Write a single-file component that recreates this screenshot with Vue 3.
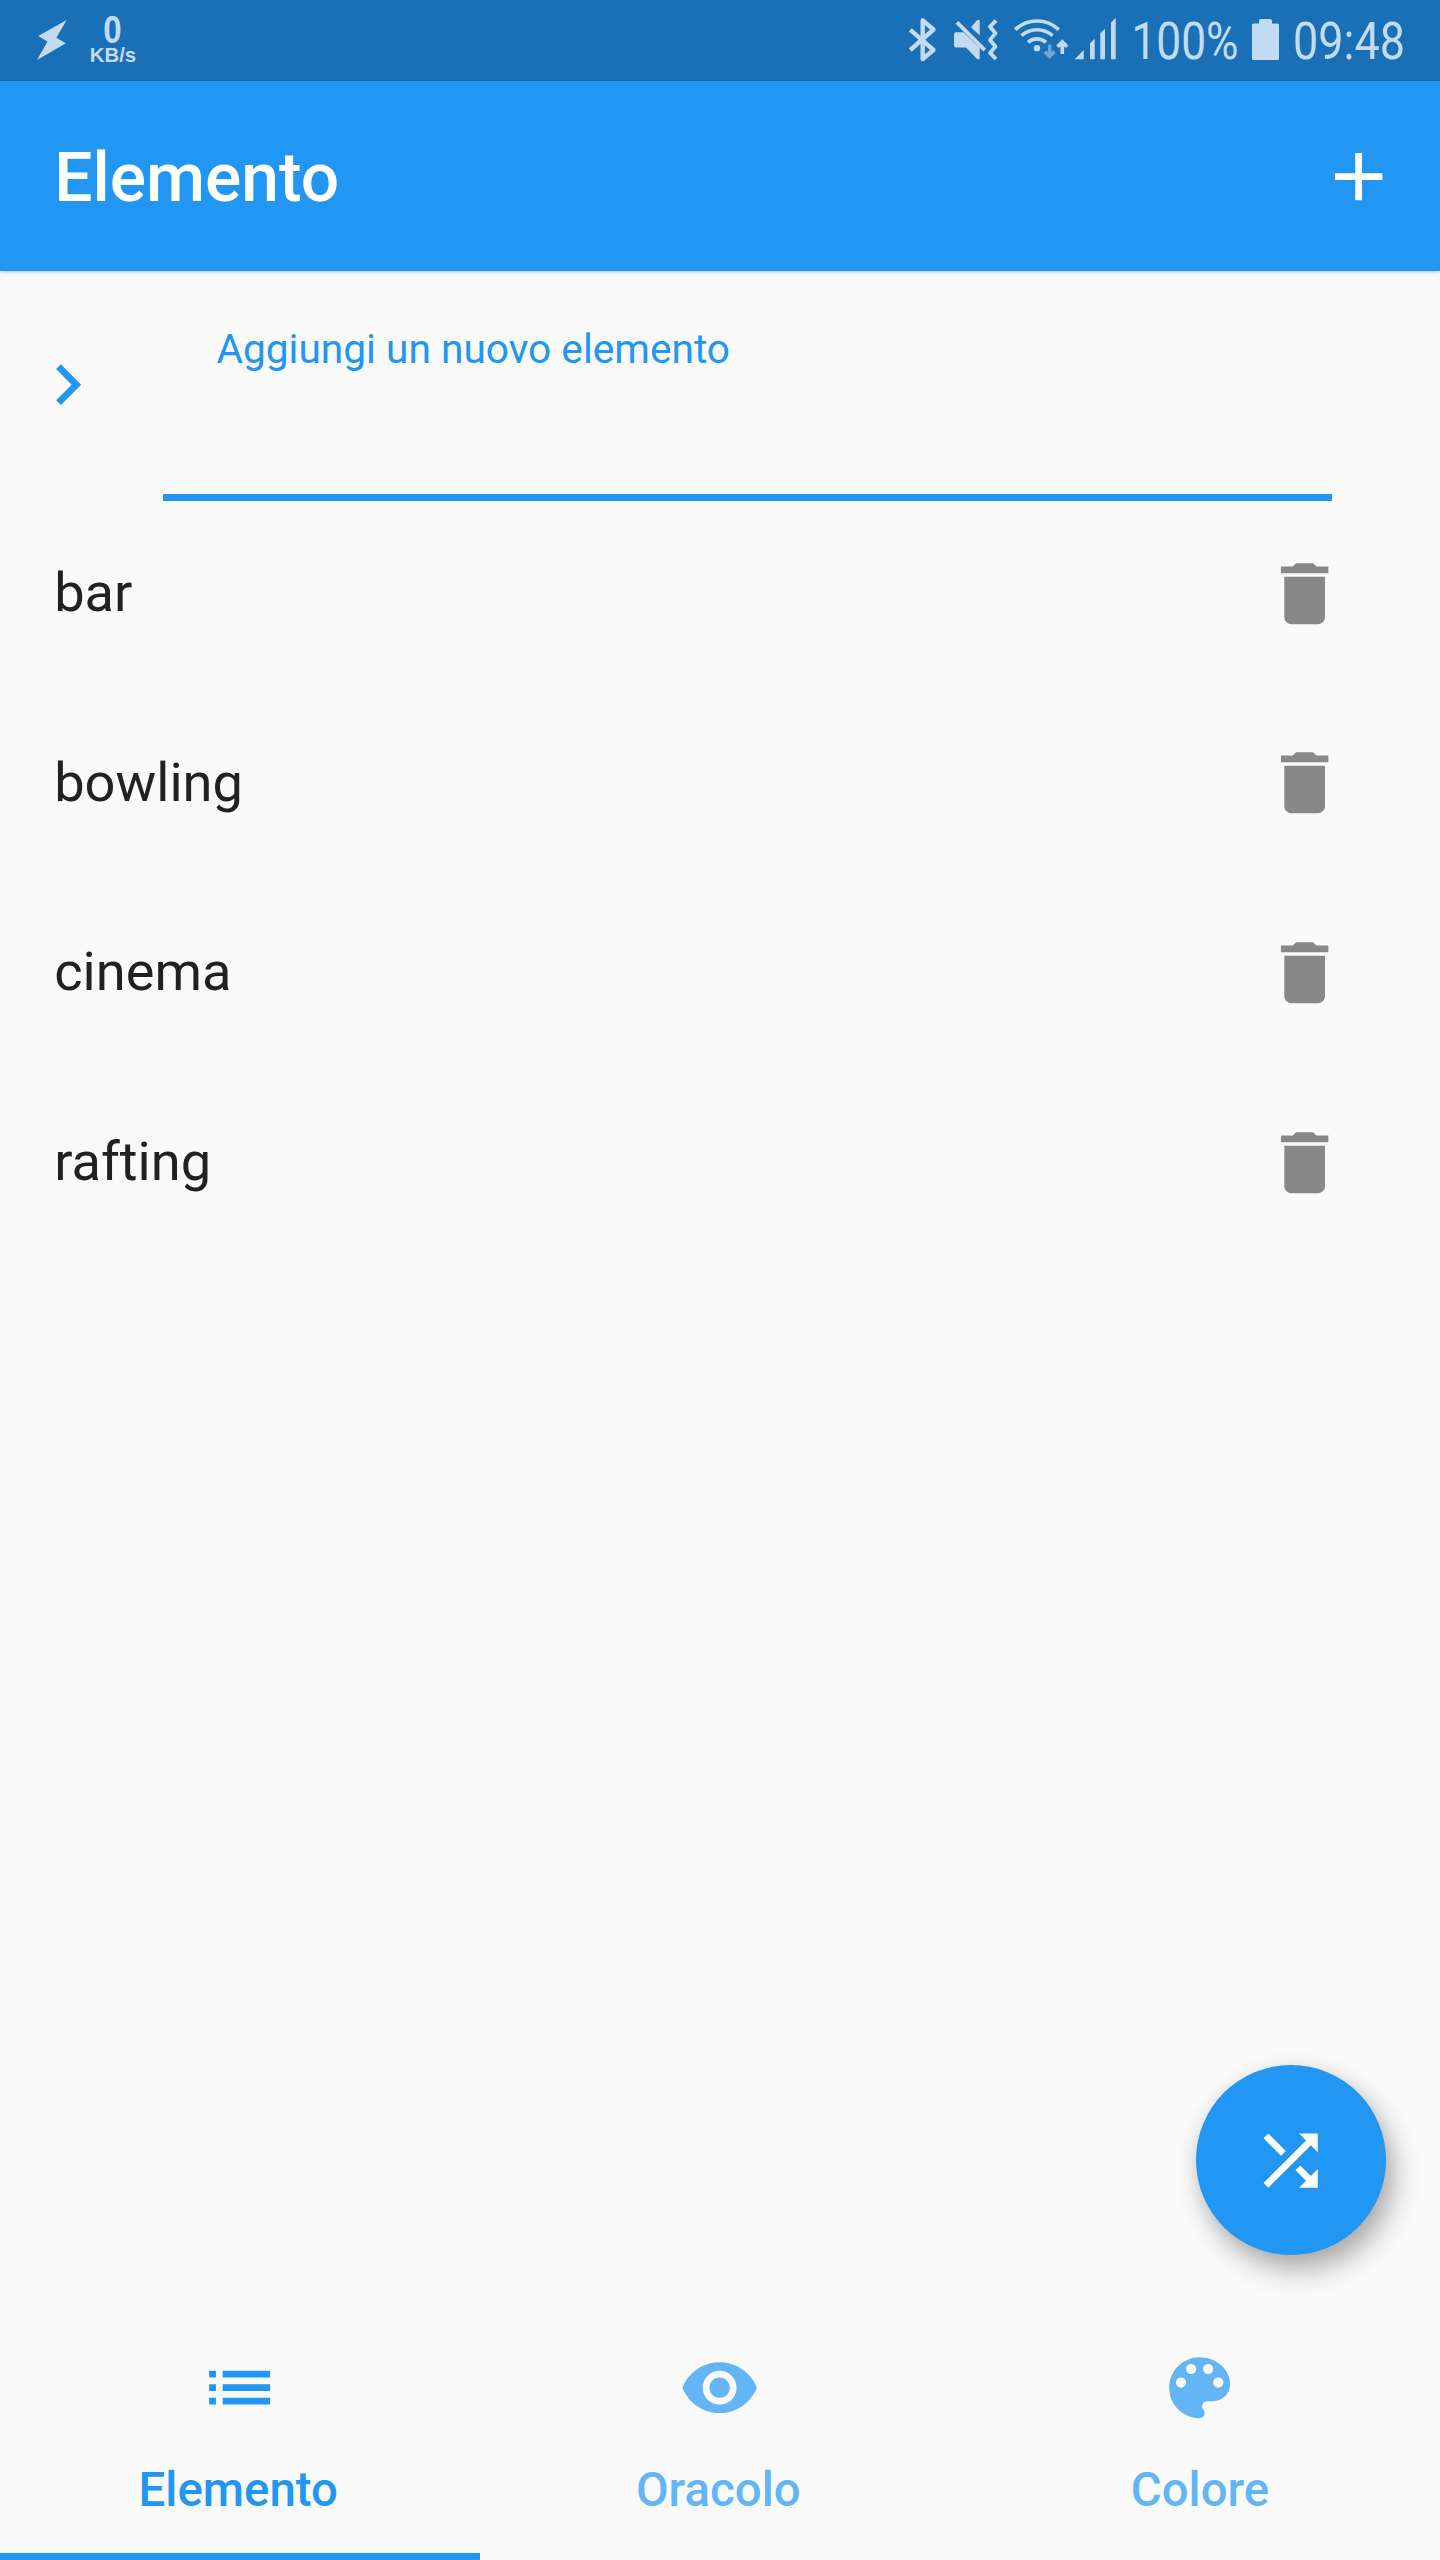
<script setup>
import { ref } from 'vue'

const items = ref(['bar', 'bowling', 'cinema', 'rafting'])
const active = ref(0)
const tabs = [
  {
    label: 'Elemento',
    icon: 'M3 13h2v-2H3v2zm0 4h2v-2H3v2zm0-8h2V7H3v2zm4 4h14v-2H7v2zm0 4h14v-2H7v2zM7 7v2h14V7H7z',
  },
  {
    label: 'Oracolo',
    icon: 'M12 4.5C7 4.5 2.73 7.61 1 12c1.73 4.39 6 7.5 11 7.5s9.27-3.11 11-7.5c-1.73-4.39-6-7.5-11-7.5zM12 17c-2.76 0-5-2.24-5-5s2.24-5 5-5 5 2.24 5 5-2.24 5-5 5zm0-8c-1.66 0-3 1.34-3 3s1.34 3 3 3 3-1.34 3-3-1.34-3-3-3z',
  },
  {
    label: 'Colore',
    icon: 'M12 3c-4.97 0-9 4.03-9 9s4.03 9 9 9c.83 0 1.5-.67 1.5-1.5 0-.39-.15-.74-.39-1.01-.23-.26-.38-.61-.38-.99 0-.83.67-1.5 1.5-1.5H16c2.76 0 5-2.24 5-5 0-4.42-4.03-8-9-8zm-5.5 9c-.83 0-1.5-.67-1.5-1.5S5.67 9 6.5 9 8 9.67 8 10.5 7.33 12 6.5 12zm3-4C8.67 8 8 7.33 8 6.5S8.67 5 9.5 5s1.5.67 1.5 1.5S10.33 8 9.5 8zm5 0c-.83 0-1.5-.67-1.5-1.5S13.67 5 14.5 5s1.5.67 1.5 1.5S15.33 8 14.5 8zm3 4c-.83 0-1.5-.67-1.5-1.5S16.67 9 17.5 9s1.5.67 1.5 1.5-.67 1.5-1.5 1.5z',
  },
]
</script>

<template>
  <div class="screen">
    <div class="status">
      <svg class="bolt" width="32" height="81" viewBox="36 0 32 81">
        <path d="M66.700 20L38.200 36l9.300 5.600L37 60l28.900-16.700-9.600-5.500z" fill="currentColor" />
      </svg>
      <div class="speed">
        <span class="speed-value">0</span>
        <span class="speed-unit">KB/s</span>
      </div>
      <div class="spacer"></div>
      <!-- bluetooth -->
      <svg width="50" height="81" viewBox="900 0 50 81">
        <path d="M910.300 29.800L933.500 50l-10.800 9V20.300l10.800 9.200-23.200 20.500" fill="none" stroke="currentColor" stroke-width="4.400" stroke-linejoin="round" />
      </svg>
      <!-- sound off, vibrate -->
      <svg width="60" height="81" viewBox="950 0 60 81">
        <path d="M971 27.300l6.300-7.300h2.400v15.600zM956 32.300h7.500L979.700 48v11.300h-2.400L966 47.400h-10a2 2 0 0 1-2-2V34.300a2 2 0 0 1 2-2z" fill="currentColor" />
        <path d="M957 22.300L984.700 50.200" stroke="currentColor" stroke-width="3.800" />
        <path d="M996 20.700l-6 6 5.500 6.500-5.500 6.700 5.500 6.500-5.500 6.500 6 6.200" fill="none" stroke="currentColor" stroke-width="3.800" stroke-linejoin="round" />
      </svg>
      <!-- wifi -->
      <svg width="62" height="81" viewBox="1010 0 62 81">
        <g fill="none" stroke="currentColor" stroke-width="3.600">
          <path d="M1015.200 29.600a32 32 0 0 1 43.600 0M1021.500 35.700a23 23 0 0 1 31 0M1028 42.300a13.500 13.500 0 0 1 18 0" />
          <path d="M1062.300 54V42.500M1057.500 46.700l4.800-4.800 4.800 4.800" />
          <path d="M1049.700 44.500V56M1044.900 51.700l4.800 4.800 4.800-4.800" opacity=".5" />
        </g>
        <circle cx="1037" cy="48.300" r="3.200" fill="currentColor" />
      </svg>
      <!-- mobile signal -->
      <svg width="48" height="81" viewBox="1072 0 48 81">
        <path d="M1074.700 59.200h9V50zM1090 59.200V43.300l4.700-4.600v20.500zM1100.300 59.200V33.300l4.700-4.600v30.500zM1111 59.200V22.500l4.700-4.600v41.300z" fill="currentColor" />
      </svg>
      <svg class="readout" width="130" height="81" viewBox="1120 0 130 81">
        <text x="1131.500" y="59.200" textLength="107" lengthAdjust="spacingAndGlyphs">100%</text>
      </svg>
      <!-- battery -->
      <svg width="33" height="81" viewBox="1250 0 33 81">
        <path d="M1253.500 23.500h5.500v-2.500a2 2 0 0 1 2-2h9a2 2 0 0 1 2 2v2.500h5.500a1.500 1.500 0 0 1 1.500 1.500v33.500a1.500 1.500 0 0 1-1.500 1.500h-24a1.500 1.500 0 0 1-1.500-1.500V25a1.500 1.500 0 0 1 1.500-1.500z" fill="currentColor" />
      </svg>
      <svg class="readout" width="157" height="81" viewBox="1283 0 157 81">
        <text x="1293" y="59.200" textLength="112" lengthAdjust="spacingAndGlyphs">09:48</text>
      </svg>
    </div>

    <header class="appbar">
      <h1>Elemento</h1>
      <svg class="icon" viewBox="0 0 24 24"><path d="M19 13h-6v6h-2v-6H5v-2h6V5h2v6h6v2z" /></svg>
    </header>

    <main>
      <div class="entry">
        <svg class="icon chevron" viewBox="0 0 24 24"><path d="M10 6L8.590 7.410 13.170 12l-4.580 4.590L10 18l6-6z" /></svg>
        <div class="field">
          <label>Aggiungi un nuovo elemento</label>
        </div>
      </div>
      <ul>
        <li v-for="item in items" :key="item">
          <span>{{ item }}</span>
          <svg class="icon trash" viewBox="0 0 24 24">
            <path d="M6 19c0 1.100.900 2 2 2h8c1.100 0 2-.900 2-2V7H6v12zM19 4h-3.500l-1-1h-5l-1 1H5v2h14V4z" />
          </svg>
        </li>
      </ul>
    </main>

    <nav>
      <div v-for="(tab, i) in tabs" :key="tab.label" class="tab" :class="{ active: i === active }" @click="active = i">
        <svg class="icon" viewBox="0 0 24 24"><path :d="tab.icon" /></svg>
        <span>{{ tab.label }}</span>
      </div>
    </nav>

    <button class="fab">
      <svg class="icon" viewBox="0 0 24 24">
        <path d="M10.590 9.170L5.410 4 4 5.410l5.170 5.170 1.420-1.410zM14.500 4l2.040 2.040L4 18.590 5.410 20 17.960 7.460 20 9.500V4h-5.500zm.330 9.410l-1.410 1.410 3.130 3.130L14.500 20H20v-5.500l-2.040 2.040-3.130-3.130z" />
      </svg>
    </button>
  </div>
</template>

<style>
body {
  margin: 0;
}
</style>

<style scoped>
.screen {
  position: relative;
  display: flex;
  flex-direction: column;
  width: 1440px;
  height: 2560px;
  overflow: hidden;
  background: #fafafa;
  color: #212121;
  font-family: Roboto, sans-serif;
}
.status {
  display: flex;
  flex: none;
  height: 81px;
  background: #1970b7;
  color: #c3dbf0;
}
.status svg {
  flex: none;
  display: block;
  overflow: visible;
}
.bolt {
  margin-left: 36px;
}
.speed {
  display: flex;
  flex-direction: column;
  align-items: center;
  width: 56px;
  margin-left: 17px;
  padding-top: 15px;
  font-family: "Liberation Sans", sans-serif;
  font-weight: 700;
}
.speed-value {
  font-size: 38px;
  line-height: 30px;
  transform: scaleX(0.87);
}
.speed-unit {
  font-size: 21px;
  line-height: 19px;
  transform: scaleX(0.97);
}
.spacer {
  flex: 1;
}
.readout text {
  font-size: 52px;
  fill: currentColor;
}
.icon {
  display: block;
  flex: none;
  width: 81.3px;
  height: 81.3px;
  fill: currentColor;
}
.appbar {
  display: flex;
  flex: none;
  align-items: center;
  justify-content: space-between;
  height: 190px;
  padding: 0 41px 0 54.2px;
  background: #2196f3;
  color: #fff;
  box-shadow: 0 1px 3px rgba(0, 0, 0, 0.24);
  z-index: 1;
}
.appbar .icon {
  margin-top: 1px;
}
h1 {
  margin: 0;
  padding-top: 3px;
  font-size: 67.75px;
  line-height: 80px;
  font-weight: 500;
}
main {
  flex: 1;
}
.entry {
  display: flex;
  height: 227.4px;
  color: #2196f3;
}
.chevron {
  margin: 73px 0 0 27.2px;
}
.field {
  box-sizing: border-box;
  width: 1169.4px;
  height: 230px;
  margin-left: 54.1px;
  padding: 54px 0 0 53.8px;
  border-bottom: 7px solid #2196f3;
}
label {
  display: block;
  font-size: 40.65px;
  line-height: 48px;
}
ul {
  margin: 0;
  padding: 0;
  list-style: none;
}
li {
  display: flex;
  align-items: center;
  justify-content: space-between;
  height: 189.75px;
  padding: 0 94.9px 0 54.2px;
  font-size: 54.2px;
  line-height: 64px;
}
li span {
  padding-bottom: 0.8px;
}
.trash {
  color: #888;
}
nav {
  display: flex;
  flex: none;
  height: 251px;
}
.tab {
  box-sizing: border-box;
  display: flex;
  flex: 1;
  flex-direction: column;
  align-items: center;
  padding-top: 37.6px;
  border-bottom: 7px solid transparent;
  color: #64b5f6;
  font-size: 47.4px;
  line-height: 56px;
  font-weight: 500;
}
.tab span {
  margin-top: 33.9px;
  padding-right: 3.5px;
}
.tab:last-child span {
  padding-right: 0;
}
.tab.active {
  color: #2196f3;
  border-bottom-color: #2196f3;
}
.fab {
  position: absolute;
  right: 54px;
  bottom: 305px;
  display: flex;
  align-items: center;
  justify-content: center;
  width: 190px;
  height: 190px;
  padding: 1px 0 0;
  border: 0;
  border-radius: 50%;
  background: #2196f3;
  color: #fff;
  box-shadow: 8px 15px 28px rgba(0, 0, 0, 0.3), 0 2px 18px rgba(0, 0, 0, 0.07);
}
</style>
